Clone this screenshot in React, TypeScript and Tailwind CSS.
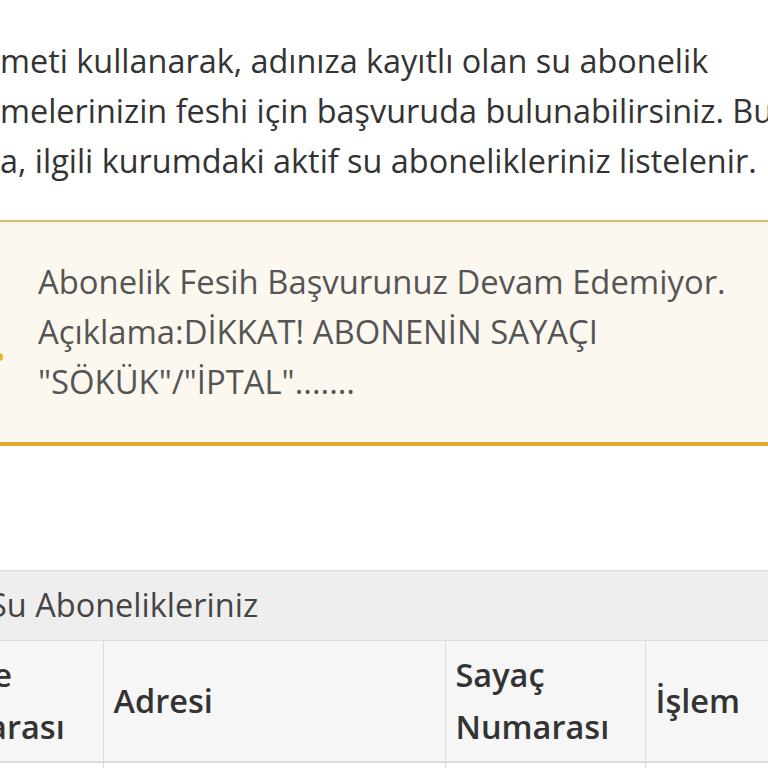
export default function App() {
  const font = { fontFamily: '"Open Sans", "Noto Sans", sans-serif' };

  return (
    <div
      className="w-[768px] h-[768px] overflow-hidden bg-white text-[#333]"
      style={font}
    >
      {/* ----------- Intro text ----------- */}
      <div className="pt-[35px] text-[32.4px] leading-[50px] whitespace-nowrap text-[#333]">
        <p>meti kullanarak, adınıza kayıtlı olan su abonelik</p>
        <p>melerinizin feshi için başvuruda bulunabilirsiniz. Bu</p>
        <p>a, ilgili kurumdaki aktif su abonelikleriniz listelenir.</p>
      </div>

      {/* ----------- Warning ----------- */}
      <div className="relative mt-[35px] bg-[#fdf8ef] border-t-2 border-b-4 border-t-[#d6bd6d] border-b-[#e7aa2c] px-[38px] py-[35px] text-[32.8px] leading-[50px] whitespace-nowrap text-[#555]">
        <span className="absolute left-[-5px] top-[131px] w-[8px] h-[8px] rounded-full bg-[#f0b429]" />
        <p>Abonelik Fesih Başvurunuz Devam Edemiyor.</p>
        <p>Açıklama:DİKKAT! ABONENİN SAYAÇI</p>
        <p>"SÖKÜK"/"İPTAL".......</p>
      </div>

      {/* ----------- Subscriptions panel ----------- */}
      <div className="mt-[124px] ml-[-99px] w-[900px] border-t border-[#dddddd]">
        <div className="bg-[#eeeeee] border-b border-[#dddddd] pl-[88px] h-[70px] flex items-center text-[32.5px] text-[#444]">
          Su Abonelikleriniz
        </div>
        <table className="w-full border-collapse text-[32.5px] leading-[52px] font-semibold text-[#333]">
          <thead>
            <tr className="bg-[#f6f6f6] border-b-2 border-[#dddddd] h-[121px]">
              <th className="w-[202px] border-r border-[#dddddd] px-[10px] text-left align-middle font-semibold">
                Abone
                <br />
                Numarası
              </th>
              <th className="w-[342px] border-r border-[#dddddd] px-[10px] text-left align-middle font-semibold">
                Adresi
              </th>
              <th className="w-[200px] border-r border-[#dddddd] px-[10px] text-left align-middle font-semibold">
                Sayaç
                <br />
                Numarası
              </th>
              <th className="px-[10px] text-left align-middle font-semibold">İşlem</th>
            </tr>
          </thead>
          <tbody>
            <tr className="h-[40px]">
              <td className="border-r border-[#dddddd]" />
              <td className="border-r border-[#dddddd]" />
              <td className="border-r border-[#dddddd]" />
              <td />
            </tr>
          </tbody>
        </table>
      </div>
    </div>
  );
}
